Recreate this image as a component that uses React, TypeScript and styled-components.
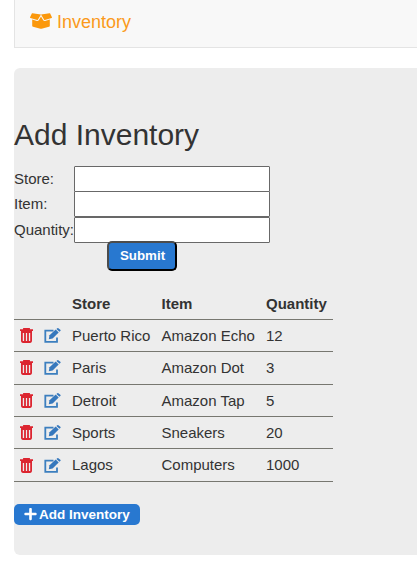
import React from "react";
import styled, { createGlobalStyle } from "styled-components";
import { FaBoxOpen, FaPlus } from "react-icons/fa";

const GlobalStyle = createGlobalStyle`
  * { box-sizing: border-box; }
  body {
    margin: 0;
    background: #fff;
    color: #333;
    font: 15px/21.4px "Liberation Sans", Arial, sans-serif;
    overflow: hidden;
  }
`;

const Page = styled.div`
  height: 566px;
  padding-left: 14px;
  overflow: hidden;
`;

const Navbar = styled.nav`
  display: flex;
  align-items: center;
  gap: 5px;
  height: 48px;
  padding: 0 0 2px 15px;
  border: solid #e4e4e4;
  border-width: 0 0 1px 1px;
  background: #f8f8f8;
  color: #fb9a1b;
  font-size: 18px;
`;

const BoxIcon = styled(FaBoxOpen)`
  width: 22px;
  height: 18px;
  color: #fb980c;
  margin-top: -4px;
`;

const Panel = styled.main`
  height: 487px;
  margin-top: 20px;
  padding-top: 50px;
  border-radius: 6px 0 0 6px;
  background: #ededed;
`;

const Title = styled.h1`
  margin: 0 0 15px;
  font-size: 30px;
  line-height: 33px;
  font-weight: 400;
`;

const Form = styled.form`
  display: grid;
  grid-template-columns: 60px 196px;
  grid-template-rows: repeat(3, 25.4px) 29px;
`;

const Label = styled.label`
  padding-top: 2px;
  white-space: nowrap;
`;

const Input = styled.input`
  width: 100%;
  height: 26px;
  padding: 1px 4px;
  border: 1px solid #686868;
  border-radius: 1px;
  background: #fff;
  font: inherit;
  outline: 0;
`;

const Submit = styled.button`
  grid-column: 2;
  width: 70px;
  height: 30px;
  margin: -1px 0 0 33px;
  padding: 0 0 1px 1px;
  border: 2px solid;
  border-color: #4c4c4c #000 #000 #4c4c4c;
  border-radius: 5px;
  background: #2878d0;
  color: #fff;
  font: bold 13.33px "Liberation Sans", Arial, sans-serif;
`;

const Table = styled.table`
  width: 319px;
  margin-top: 16.2px;
  border-collapse: separate;
  border-spacing: 0;
  table-layout: fixed;
`;

const Heading = styled.th`
  height: 32.4px;
  padding: 5.8px 0 4.2px;
  border-bottom: 1px solid #777770;
  text-align: left;
`;

const Cell = styled.td`
  height: 32.4px;
  padding: 5px 0;
  border-bottom: 1px solid #777770;
  white-space: nowrap;
`;

const Actions = styled.div`
  display: flex;
  align-items: center;
  gap: 11px;
  height: 21px;
  padding-left: 6px;
`;

const AddButton = styled.button`
  display: flex;
  align-items: center;
  gap: 2px;
  width: 126px;
  height: 21px;
  margin-top: 22px;
  padding: 0 0 0 10px;
  border: 0;
  border-radius: 5px;
  background: #2878d0;
  color: #fff;
  font: bold 13.5px "Liberation Sans", Arial, sans-serif;
  white-space: nowrap;
`;

const PlusIcon = styled(FaPlus)`
  flex: none;
  width: 13px;
  height: 14px;
  margin-top: -1px;
`;

const TrashIcon = () => (
  <svg width="13" height="15" viewBox="0 0 13 15" fill="none" stroke="#dc2530">
    <path d="M0 2.2H13M4 2V.75H9V2" strokeWidth="1.8" />
    <path d="M1.9 4V13.1Q1.9 14 2.8 14H10.2Q11.1 14 11.1 13.1V4ZM5 5V13M8 5V13" strokeWidth="1.8" />
  </svg>
);

const EditIcon = () => (
  <svg width="18" height="15" viewBox="0 0 18 15" fill="none">
    <path d="M9.5 2.7H1.3V13.8H13V9.5" stroke="#3c7fbf" strokeWidth="1.8" />
    <path d="M4.8 11.2L5.5 7.3L11.7 1.5L14.7 4.5L8.6 10.4Z" fill="#3678bd" />
    <path d="M12.4 1L13.3.3Q14 -.2 14.7.4L16.3 1.7Q17 2.4 16.3 3L15.4 3.8Z" fill="#3678bd" />
  </svg>
);

const items = [
  ["Puerto Rico", "Amazon Echo", "12"],
  ["Paris", "Amazon Dot", "3"],
  ["Detroit", "Amazon Tap", "5"],
  ["Sports", "Sneakers", "20"],
  ["Lagos", "Computers", "1000"],
];

const ActionColumn = styled.col`
  width: 58px;
`;

const StoreColumn = styled.col`
  width: 89.5px;
`;

const ItemColumn = styled.col`
  width: 104.5px;
`;

const QuantityColumn = styled.col`
  width: 67px;
`;

export default function App() {
  return (
    <Page>
      <GlobalStyle />
      <Navbar><BoxIcon />Inventory</Navbar>
      <Panel>
        <Title>Add Inventory</Title>
        <Form>
          <Label htmlFor="store">Store:</Label><Input id="store" />
          <Label htmlFor="item">Item:</Label><Input id="item" />
          <Label htmlFor="quantity">Quantity:</Label><Input id="quantity" />
          <Submit type="button">Submit</Submit>
        </Form>
        <Table>
          <colgroup>
            <ActionColumn />
            <StoreColumn />
            <ItemColumn />
            <QuantityColumn />
          </colgroup>
          <thead>
            <tr><Heading /><Heading>Store</Heading><Heading>Item</Heading><Heading>Quantity</Heading></tr>
          </thead>
          <tbody>
            {items.map(([store, item, quantity]) => (
              <tr key={store}>
                <Cell><Actions><TrashIcon /><EditIcon /></Actions></Cell>
                <Cell>{store}</Cell>
                <Cell>{item}</Cell>
                <Cell>{quantity}</Cell>
              </tr>
            ))}
          </tbody>
        </Table>
        <AddButton type="button"><PlusIcon />Add Inventory</AddButton>
      </Panel>
    </Page>
  );
}
